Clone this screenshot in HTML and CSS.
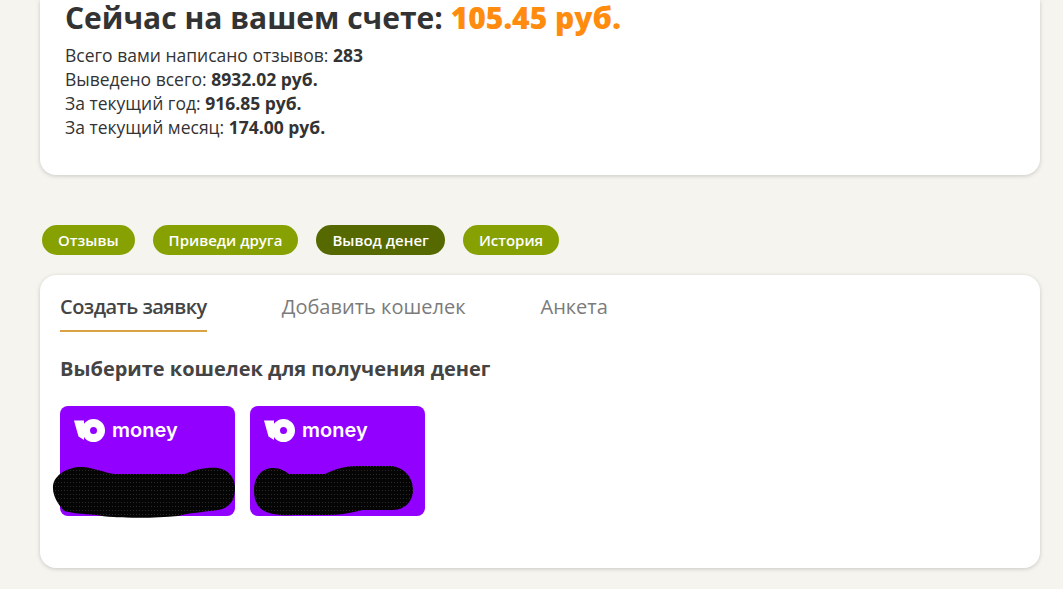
FILE: index.html
```html
<!DOCTYPE html>
<html lang="ru">
<head>
    <meta charset="UTF-8">
    <meta name="viewport" content="width=device-width, initial-scale=1.0">
    <title>Вывод денег</title>
    <link rel="stylesheet" href="styles.css">
</head>
<body>
    <div class="page">
        <section class="card balance">
            <h1>Сейчас на вашем счете: <span class="amount">105.45 руб.</span></h1>
            <p>Всего вами написано отзывов: <b>283</b></p>
            <p>Выведено всего: <b>8932.02 руб.</b></p>
            <p>За текущий год: <b>916.85 руб.</b></p>
            <p>За текущий месяц: <b>174.00 руб.</b></p>
        </section>

        <nav class="pills">
            <a class="pill">Отзывы</a>
            <a class="pill">Приведи друга</a>
            <a class="pill active">Вывод денег</a>
            <a class="pill">История</a>
        </nav>

        <section class="card withdraw">
            <div class="tabs">
                <a class="tab active">Создать заявку</a>
                <a class="tab">Добавить кошелек</a>
                <a class="tab">Анкета</a>
            </div>
            <h2>Выберите кошелек для получения денег</h2>
            <div class="wallets">
                <div class="wallet">
                    <div class="wallet-logo">
                        <svg width="32" height="23" viewBox="0 0 32 23"><path fill="#fff" d="M0 1.5H10V21L4.5 17.5Z"/><path fill="#fff" fill-rule="evenodd" d="M19.5 0a11.5 11.5 0 1 1 0 23 11.5 11.5 0 0 1 0-23Zm0 8a3.5 3.5 0 1 0 0 7 3.5 3.5 0 0 0 0-7Z"/></svg>
                        <span>money</span>
                    </div>
                    <svg class="scribble scribble-one" width="184" height="52" viewBox="0 0 184 52">
                        <defs>
                            <pattern id="scribbleDots" width="3" height="4" patternUnits="userSpaceOnUse">
                                <rect width="3" height="4" fill="#050505"/>
                                <rect width="1" height="1" fill="#2a2a2a"/>
                            </pattern>
                        </defs>
                        <path fill="url(#scribbleDots)" d="M1 20C2 8 18 0 31 1c12 1 22 6 32 7h70c8-4 22-7 33-6 11 2 17 10 17 20 0 12-5 20-17 22-14 2-30 3-40 6-28 3-68 2-82-1-14-1-24-2-32-4C11 43 0 33 1 20Z"/>
                    </svg>
                </div>
                <div class="wallet">
                    <div class="wallet-logo">
                        <svg width="32" height="23" viewBox="0 0 32 23"><path fill="#fff" d="M0 1.5H10V21L4.5 17.5Z"/><path fill="#fff" fill-rule="evenodd" d="M19.5 0a11.5 11.5 0 1 1 0 23 11.5 11.5 0 0 1 0-23Zm0 8a3.5 3.5 0 1 0 0 7 3.5 3.5 0 0 0 0-7Z"/></svg>
                        <span>money</span>
                    </div>
                    <svg class="scribble scribble-two" width="161" height="50" viewBox="0 0 161 50"><path fill="url(#scribbleDots)" d="M1 24C1 12 8 2 20 2c7 0 12 3 16 6h36c10-5 20-8 32-8h34c12 1 22 10 22 24 0 11-8 20-20 20h-30c-10 2-20 5-34 5H40C26 50 12 48 6 41 2 36 1 30 1 24Z"/></svg>
                </div>
            </div>
        </section>
    </div>
</body>
</html>
```

FILE: styles.css
```css
body {
    font-family: "Open Sans", "Noto Sans", sans-serif;
    background-color: #f5f4ef;
    color: #333;
    margin: 0;
}

.page {
    width: 1000px;
    margin-left: 40px;
    padding-bottom: 21px;
}

.card {
    background-color: #fff;
    border-radius: 16px;
    box-shadow: 0px 1px 4px rgba(0, 0, 0, 0.18);
}

.balance {
    height: 175px;
    box-sizing: border-box;
    padding: 0 25px;
    border-radius: 0 0 16px 16px;
}

.balance h1 {
    margin: 0 0 7px;
    font-size: 30px;
    line-height: 36px;
    font-weight: 700;
}

.amount {
    color: #ff8c0f;
    font-weight: 800;
}

.balance p {
    margin: 0;
    font-size: 17.5px;
    line-height: 24px;
}

.pills {
    display: flex;
    gap: 18px;
    margin: 50px 0 20px 2px;
}

.pill {
    height: 30px;
    padding: 0 16px;
    border-radius: 15px;
    background-color: #87a103;
    color: #fff;
    font-size: 15px;
    font-weight: 600;
    line-height: 31px;
}

.pill.active {
    background-color: #566900;
}

.withdraw {
    height: 293px;
    box-sizing: border-box;
    padding: 16px 20px 0;
}

.tabs {
    display: flex;
    gap: 75px;
}

.tab {
    height: 39px;
    color: #7b7b7b;
    font-size: 20px;
    line-height: 32px;
}

.tab.active {
    color: #444;
    font-weight: 600;
    letter-spacing: -0.027em;
    border-bottom: 2px solid #dba243;
}

.withdraw h2 {
    margin: 24px 0 24px;
    color: #444;
    font-size: 20px;
    line-height: 26px;
    font-weight: 700;
}

.wallets {
    display: flex;
    gap: 15px;
}

.wallet {
    position: relative;
    width: 175px;
    height: 110px;
    box-sizing: border-box;
    padding: 13px 14px;
    background-color: #9200ff;
    border-radius: 8px;
}

.wallet-logo {
    display: flex;
    align-items: center;
    gap: 6px;
    color: #fff;
    font-family: Inter, sans-serif;
    font-size: 20px;
    font-weight: 600;
    line-height: 23px;
}

.scribble {
    position: absolute;
}

.scribble-one {
    left: -8px;
    top: 60px;
}

.scribble-two {
    left: 3px;
    top: 60px;
}
```
